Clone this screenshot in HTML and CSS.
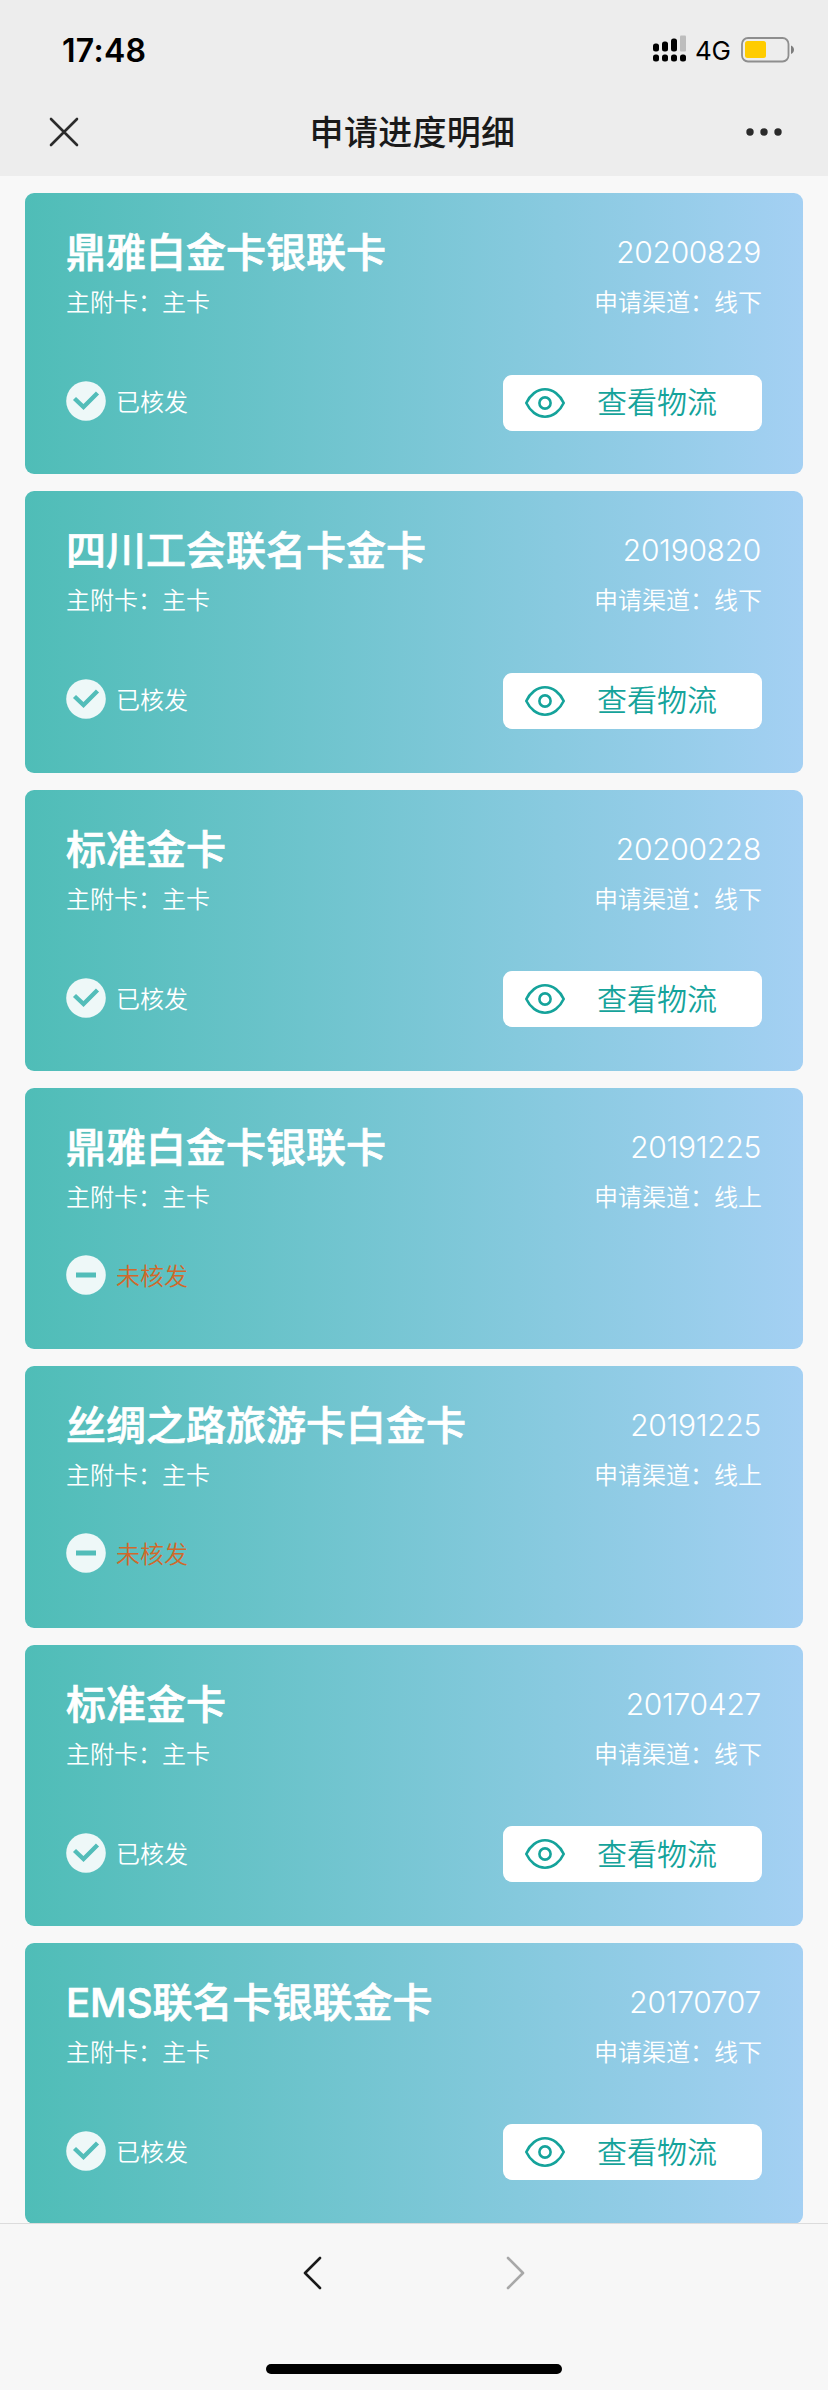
FILE: index.html
```html
<!DOCTYPE html>
<html lang="zh-CN">
<head>
  <meta charset="UTF-8">
  <meta name="viewport" content="width=device-width, initial-scale=1.0">
  <link rel="stylesheet" href="styles.css">
  <title>申请进度明细</title>
</head>
<body>
  <div class="status-bar">
    <span class="time">17:48</span>
    <div class="status-right">
      <svg class="signal" width="34" height="28" viewBox="0 0 34 28">
        <rect x="0" y="8.500" width="6" height="8" rx="2.500"/>
        <rect x="9" y="6.500" width="6" height="10" rx="2.500"/>
        <rect x="18" y="3.500" width="6" height="13" rx="2.500"/>
        <rect x="27" y="0.500" width="6" height="16" rx="1" fill="#bdbdbd"/>
        <rect x="0" y="19.500" width="6" height="7" rx="2.500"/>
        <rect x="9" y="19.500" width="6" height="7" rx="2.500"/>
        <rect x="18" y="19.500" width="6" height="7" rx="2.500"/>
        <rect x="27" y="19.500" width="6" height="7" rx="2.500"/>
      </svg>
      <span class="network">4G</span>
      <svg class="battery" width="54" height="26" viewBox="0 0 54 26">
        <rect x="1" y="1" width="46.500" height="23.500" rx="6" fill="none" stroke="#8e8e8e" stroke-width="1.800"/>
        <rect x="4" y="4" width="21" height="17" rx="2.500" fill="#ffcc00"/>
        <path d="M50 8.500c4 1.500 4 7 0 8.500z" fill="#7d7d7d"/>
      </svg>
    </div>
  </div>

  <header class="nav">
    <svg width="30" height="30" viewBox="0 0 30 30">
      <path d="M2 2L28 28M28 2L2 28" stroke="#2b2b2b" stroke-width="2.600" stroke-linecap="round"/>
    </svg>
    <h1>申请进度明细</h1>
    <svg width="36" height="8" viewBox="0 0 36 8" fill="#2b2b2b">
      <circle cx="4" cy="4" r="3.700"/>
      <circle cx="18" cy="4" r="3.700"/>
      <circle cx="32" cy="4" r="3.700"/>
    </svg>
  </header>

  <main id="card-list"></main>

  <footer class="toolbar">
    <div class="arrows">
      <svg width="20" height="36" viewBox="0 0 20 36">
        <path d="M17 3L2 18L17 33" fill="none" stroke="#1a1a1a" stroke-width="2.600" stroke-linecap="round" stroke-linejoin="round"/>
      </svg>
      <svg width="20" height="36" viewBox="0 0 20 36">
        <path d="M2 3L17 18L2 33" fill="none" stroke="#a8a8a8" stroke-width="2.600" stroke-linecap="round" stroke-linejoin="round"/>
      </svg>
    </div>
    <div class="home-bar"></div>
  </footer>

  <script>
const cards = [
  { name: "鼎雅白金卡银联卡", date: "20200829", channel: "线下", issued: true },
  { name: "四川工会联名卡金卡", date: "20190820", channel: "线下", issued: true },
  { name: "标准金卡", date: "20200228", channel: "线下", issued: true },
  { name: "鼎雅白金卡银联卡", date: "20191225", channel: "线上", issued: false },
  { name: "丝绸之路旅游卡白金卡", date: "20191225", channel: "线上", issued: false },
  { name: "标准金卡", date: "20170427", channel: "线下", issued: true },
  { name: "EMS联名卡银联金卡", date: "20170707", channel: "线下", issued: true },
];

const checkMark = `<path d="M8.500 17.500L17.500 26L31.500 12" fill="none" stroke="#52bdb9" stroke-width="4.400"/>`;
const minusMark = `<path d="M10 20H30" fill="none" stroke="#52bdb9" stroke-width="5"/>`;

const button = `
  <button class="logistics-button">
    <svg width="40" height="30" viewBox="0 0 40 30" fill="none" stroke="#15a39b" stroke-width="2.600">
      <path d="M1.300 15C5 7 12 1.300 20 1.300S35 7 38.700 15C35 23 28 28.700 20 28.700S5 23 1.300 15Z"/>
      <circle cx="20" cy="15" r="5.600"/>
    </svg>
    <span>查看物流</span>
  </button>`;

document.getElementById("card-list").innerHTML = cards.map(card => `
  <section class="card ${card.issued ? "issued" : "rejected"}">
    <div class="row">
      <h2>${card.name}</h2>
      <span class="date">${card.date}</span>
    </div>
    <div class="row small">
      <span>主附卡：主卡</span>
      <span>申请渠道：${card.channel}</span>
    </div>
    <div class="row bottom">
      <div class="state">
        <svg width="40" height="40" viewBox="0 0 40 40">
          <circle cx="20" cy="20" r="19.800" fill="#eef8f8"/>
          ${card.issued ? checkMark : minusMark}
        </svg>
        <span>${card.issued ? "已核发" : "未核发"}</span>
      </div>
      ${card.issued ? button : ""}
    </div>
  </section>`).join("");
  </script>
</body>
</html>
```
FILE: styles.css
```css
* {
  box-sizing: border-box;
}

body {
  display: flex;
  flex-direction: column;
  height: 2390px;
  margin: 0;
  background-color: #f8f8f8;
  font-family: Inter, "Noto Sans CJK SC", sans-serif;
}

svg {
  display: block;
  flex-shrink: 0;
}

.status-bar {
  display: flex;
  justify-content: space-between;
  align-items: center;
  height: 88px;
  padding: 12px 34px 0 62px;
  background-color: #ededed;
}

.time {
  font-size: 32px;
  font-weight: 600;
  letter-spacing: 0.3px;
}

.status-right {
  display: flex;
  align-items: center;
}

.signal {
  margin-top: -3px;
}

.network {
  margin-left: 8px;
  width: 46px;
  font-size: 26px;
  letter-spacing: -0.2px;
}

.battery {
  margin-right: -1px;
}

.nav {
  display: flex;
  justify-content: space-between;
  align-items: center;
  height: 88px;
  padding: 0 46px 0 49px;
  background-color: #ededed;
}

.nav h1 {
  margin: -4px 0 0;
  font-size: 34px;
  font-weight: 500;
  letter-spacing: 0.3px;
  color: #1a1a1a;
}

#card-list {
  display: flex;
  flex-direction: column;
  gap: 17px;
  padding: 17px 25px 0;
}

.card {
  height: 281.330px;
  padding: 32px 41px 0;
  border-radius: 9px;
  background: linear-gradient(to right, #4fbdb7, #a4d0f3);
  color: #fff;
}

.card.rejected {
  height: 261.330px;
}

.row {
  display: flex;
  justify-content: space-between;
  align-items: center;
}

.card h2 {
  margin: 0;
  font-size: 40px;
  font-weight: 500;
  line-height: 56px;
  -webkit-text-stroke: 0.7px #fff;
}

.date {
  margin: -2px 1px 0 0;
  font-size: 30px;
  font-weight: 300;
  letter-spacing: -0.3px;
}

.small {
  margin-top: 4px;
  font-size: 24px;
  font-weight: 350;
  line-height: 36px;
}

.bottom {
  height: 56px;
  margin-top: 53.500px;
}

.rejected .bottom {
  height: 40px;
  margin-top: 39px;
}

.state {
  display: flex;
  align-items: center;
  gap: 10px;
  font-size: 24px;
  font-weight: 350;
}

.state span {
  margin-top: -1px;
}

.issued .state {
  margin-top: -3px;
}

.rejected .state span {
  color: #d0692b;
}

.logistics-button {
  display: flex;
  align-items: center;
  gap: 32px;
  width: 259px;
  height: 56px;
  padding: 0 22px;
  border: none;
  border-radius: 9px;
  background-color: #fff;
  color: #15a39b;
  font-family: inherit;
  font-size: 30px;
  font-weight: 350;
}

.logistics-button span {
  margin-top: -5px;
}

.toolbar {
  display: flex;
  flex-direction: column;
  justify-content: space-between;
  align-items: center;
  flex: 1;
  margin-top: -1px;
  padding: 31px 0 16px;
  border-top: 1px solid #dcdcdc;
  background-color: #f7f7f7;
}

.arrows {
  display: flex;
  gap: 183px;
}

.home-bar {
  width: 296px;
  height: 10px;
  border-radius: 5px;
  background-color: #000;
}
```
